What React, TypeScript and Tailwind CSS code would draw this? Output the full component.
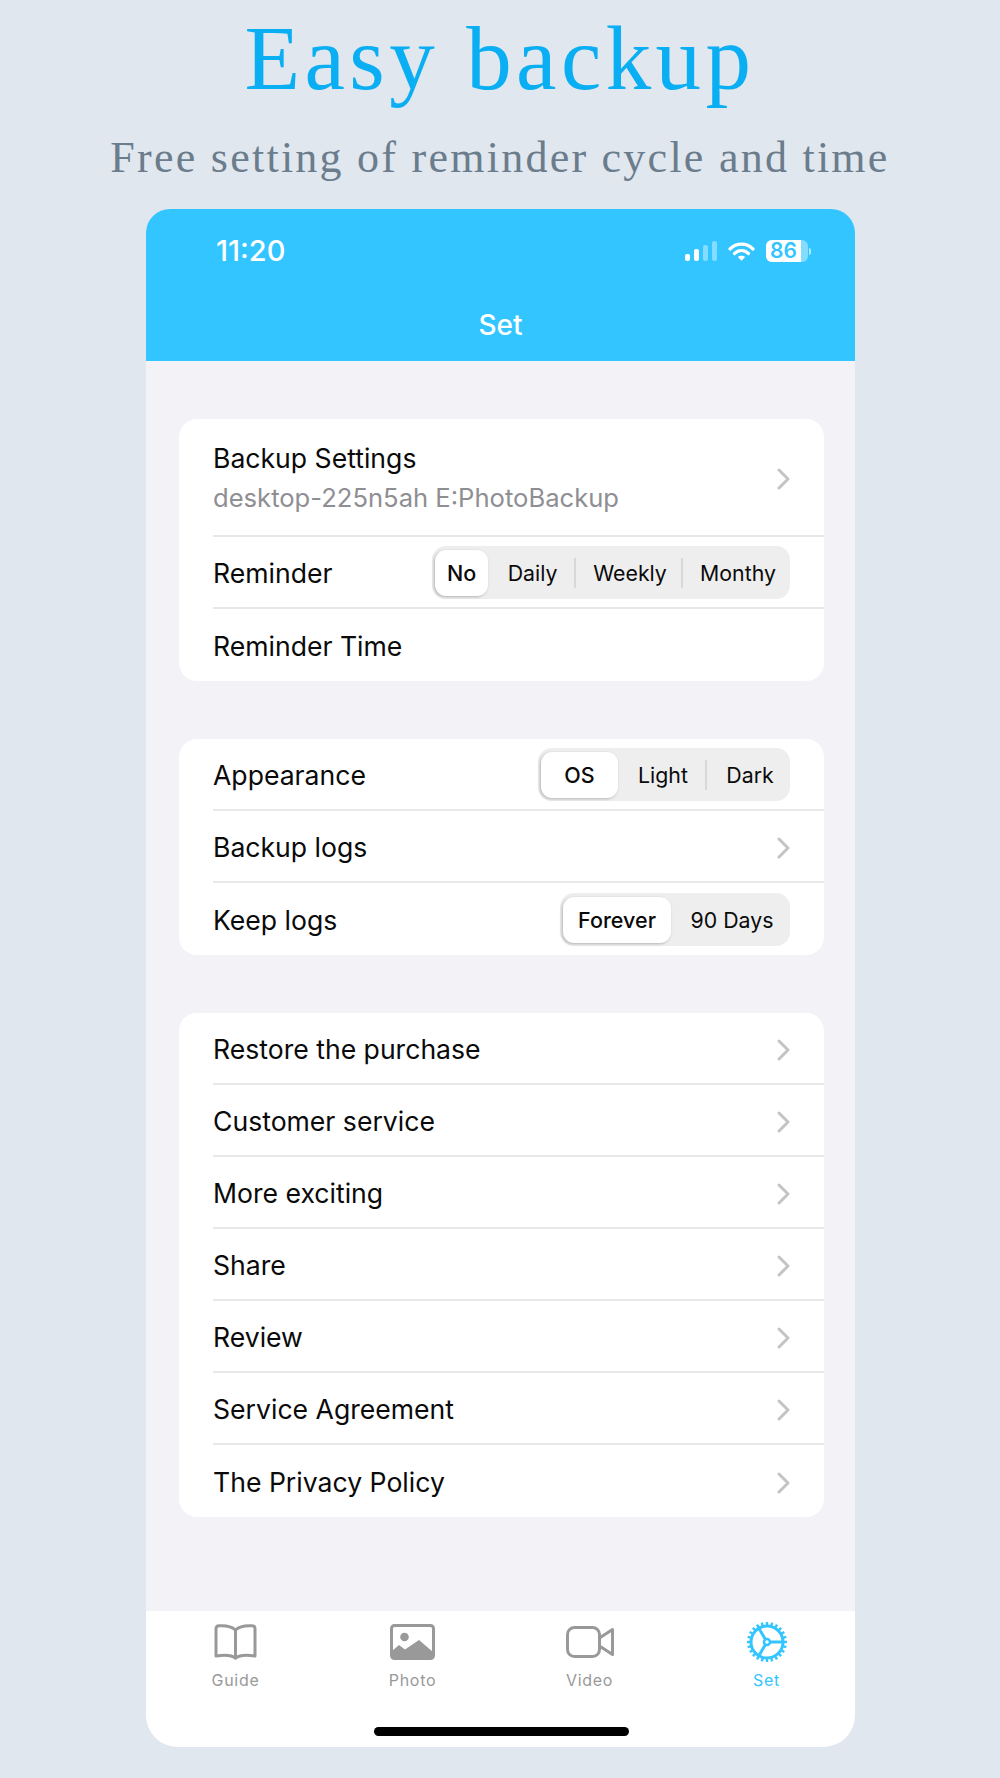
import { ReactNode } from "react";

const rowLabel = "pt-[2px] text-[26.6px] leading-[34px] text-[#0a0a0a]";

function Chevron() {
  return (
    <svg width="13" height="22" viewBox="0 0 13 22" fill="none" className="mt-[3px] shrink-0">
      <path d="M2 2l9 9-9 9" stroke="#c4c4c6" strokeWidth="3" strokeLinecap="round" strokeLinejoin="round" />
    </svg>
  );
}

type Seg = { label: string; width: string; divider?: boolean };

function Segmented({ items }: { items: Seg[] }) {
  return (
    <div className="mt-[1px] flex h-[53px] items-center rounded-[14px] bg-[#eeeeef] pl-[3px]">
      {items.map((s, i) =>
        i === 0 ? (
          <div
            key={s.label}
            className={`${s.width} flex h-[46px] items-center justify-center rounded-[11px] bg-white pt-[2px] text-[21.5px] font-medium text-[#0a0a0a] shadow-[-1px_1px_3px_rgba(0,0,0,0.25)]`}
          >
            {s.label}
          </div>
        ) : (
          <div key={s.label} className={`${s.width} flex h-[30px] items-center justify-center pt-[2px] pl-[3px] text-[21.3px] text-[#0a0a0a] ${s.divider ? "border-r-2 border-[#d8d8da]" : ""}`}>
            {s.label}
          </div>
        )
      )}
    </div>
  );
}

function Row({ children, last }: { children: ReactNode; last?: boolean }) {
  return (
    <div className="pl-[34px]">
      <div className={`flex h-[72px] items-center justify-between pr-[34px] ${last ? "" : "border-b-2 border-[#e8e8ea]"}`}>{children}</div>
    </div>
  );
}

function LinkRow({ label, last }: { label: string; last?: boolean }) {
  return (
    <Row last={last}>
      <span className={rowLabel}>{label}</span>
      <Chevron />
    </Row>
  );
}

function Card({ children }: { children: ReactNode }) {
  return <div className="mb-[58px] rounded-[18px] bg-white">{children}</div>;
}

function BookIcon() {
  return (
    <svg width="43" height="36" viewBox="0 0 43 36" fill="none" stroke="#999999" strokeWidth="3" strokeLinejoin="round" strokeLinecap="round">
      <path d="M21.5 6C18 2.8 13 1.8 8 1.8H5Q2 1.8 2 5V32C8 31 16.500 30 21.500 34C26.500 30 35 31 41 32V5Q41 1.800 38 1.800H35C30 1.800 25 2.800 21.500 6Z" />
      <path d="M21.500 6V34" />
    </svg>
  );
}

function PhotoIcon() {
  return (
    <svg width="45" height="36" viewBox="0 0 45 36" fill="none">
      <rect x="1.500" y="1.500" width="42" height="33" rx="3" stroke="#999999" strokeWidth="3" />
      <circle cx="14.500" cy="13" r="4.300" fill="#999999" />
      <path d="M2 33V27L9 21L15 25.500L29 16L43 28V33Z" fill="#999999" />
    </svg>
  );
}

function VideoIcon() {
  return (
    <svg width="48" height="32" viewBox="0 0 48 32" fill="none" stroke="#999999" strokeWidth="3" strokeLinejoin="round">
      <rect x="1.500" y="1.500" width="32" height="29" rx="7" />
      <path d="M33.500 12L46.500 3.500V28.500L33.500 20" />
    </svg>
  );
}

function GearIcon() {
  const teeth = Array.from({ length: 24 }, (_, i) => i * 15);
  return (
    <svg width="42" height="42" viewBox="0 0 42 42" fill="none" stroke="#33c5ff">
      <circle cx="21" cy="21" r="16" strokeWidth="3" />
      <circle cx="21" cy="21" r="3" strokeWidth="2.500" />
      <path d="M24 21H37M19.500 18.500L13 7.500M19.500 23.500L13 34.500" strokeWidth="3" />
      {teeth.map((a) => (
        <rect key={a} x="19.800" y="1" width="2.400" height="4" fill="#33c5ff" stroke="none" transform={`rotate(${a} 21 21)`} />
      ))}
    </svg>
  );
}

function Tab({ label, icon, active }: { label: string; icon: ReactNode; active?: boolean }) {
  return (
    <div className="flex flex-col items-center">
      <div className="flex h-[44px] items-center">{icon}</div>
      <span className={`mt-[6px] text-[16px] leading-[20px] tracking-[0.7px] ${active ? "text-[#33c5ff]" : "text-[#999999]"}`}>{label}</span>
    </div>
  );
}

export default function App() {
  return (
    <div className="h-[1778px] w-[1000px] overflow-hidden bg-[#e0e7ee] font-['Inter',sans-serif]">
      <h1 className="pt-[9px] text-center font-['Liberation_Serif',serif] text-[91px] leading-[100px] font-normal tracking-[4.4px] text-[#0aaef3]">Easy backup</h1>
      <p className="mt-[24px] text-center font-['Liberation_Serif',serif] text-[44px] leading-[50px] tracking-[2.25px] text-[#6b7c8c]">Free setting of reminder cycle and time</p>

      <div className="mt-[26px] ml-[146px] flex h-[1538px] w-[709px] flex-col overflow-hidden rounded-t-[24px] rounded-b-[32px] bg-[#f2f2f7]">
        {/* Header */}
        <div className="h-[152px] bg-[#33c5ff] text-white">
          <div className="flex h-[84px] items-center justify-between pr-[44px] pl-[70px]">
            <span className="text-[29px] font-medium">11:20</span>
            <div className="flex items-center">
              <div className="flex h-[20px] items-end gap-[4px]">
                <div className="h-[7px] w-[5px] rounded-[2px] bg-white" />
                <div className="h-[12px] w-[5px] rounded-[2px] bg-white" />
                <div className="h-[16px] w-[5px] rounded-[2px] bg-white/40" />
                <div className="h-[20px] w-[5px] rounded-[2px] bg-white/40" />
              </div>
              <svg width="27" height="19" viewBox="0 0 27 19" fill="none" stroke="white" strokeWidth="3.200" strokeLinecap="round" className="ml-[11px]">
                <path d="M2 7C8.500 .6 18.500 .6 25 7" />
                <path d="M6.500 11.500C10.500 7.500 16.500 7.500 20.500 11.500" />
                <path d="M13.500 18.800L9.800 15C11.800 13.200 15.200 13.200 17.200 15Z" fill="white" stroke="none" />
              </svg>
              <div className="ml-[11px] flex items-center">
                <div className="flex h-[22px] w-[42px] items-center rounded-[6px] bg-white/40">
                  <div className="flex h-full w-[35px] items-center justify-center rounded-l-[6px] bg-white text-[21px] leading-[22px] font-semibold text-[#33c5ff]">86</div>
                </div>
                <div className="ml-[1px] h-[7px] w-[2px] rounded-r-[2px] bg-white/60" />
              </div>
            </div>
          </div>
          <div className="flex h-[64px] items-center justify-center text-[28px] font-medium">Set</div>
        </div>

        {/* Content */}
        <div className="flex-1 pt-[58px] pr-[31px] pl-[33px]">
          <Card>
            <div className="pl-[34px]">
              <div className="flex h-[118px] items-center justify-between border-b-2 border-[#e8e8ea] pr-[34px]">
                <div>
                  <div className={rowLabel}>Backup Settings</div>
                  <div className="mt-[6px] text-[25.6px] leading-[34px] text-[#8e8e93]">desktop-225n5ah E:PhotoBackup</div>
                </div>
                <Chevron />
              </div>
            </div>
            <Row>
              <span className={rowLabel}>Reminder</span>
              <Segmented
                items={[
                  { label: "No", width: "w-[53px]" },
                  { label: "Daily", width: "w-[88px]", divider: true },
                  { label: "Weekly", width: "w-[107px]", divider: true },
                  { label: "Monthy", width: "w-[107px]" },
                ]}
              />
            </Row>
            <Row last>
              <span className={rowLabel}>Reminder Time</span>
            </Row>
          </Card>

          <Card>
            <Row>
              <span className={rowLabel}>Appearance</span>
              <Segmented
                items={[
                  { label: "OS", width: "w-[77px]" },
                  { label: "Light", width: "w-[89px]", divider: true },
                  { label: "Dark", width: "w-[83px]" },
                ]}
              />
            </Row>
            <LinkRow label="Backup logs" />
            <Row last>
              <span className={rowLabel}>Keep logs</span>
              <Segmented
                items={[
                  { label: "Forever", width: "w-[108px]" },
                  { label: "90 Days", width: "w-[119px]" },
                ]}
              />
            </Row>
          </Card>

          <Card>
            <LinkRow label="Restore the purchase" />
            <LinkRow label="Customer service" />
            <LinkRow label="More exciting" />
            <LinkRow label="Share" />
            <LinkRow label="Review" />
            <LinkRow label="Service Agreement" />
            <LinkRow label="The Privacy Policy" last />
          </Card>
        </div>

        {/* Tab bar */}
        <div className="flex h-[136px] flex-col bg-white">
          <div className="grid grid-cols-4 pt-[9px] pl-[1px]">
            <Tab label="Guide" icon={<BookIcon />} />
            <Tab label="Photo" icon={<PhotoIcon />} />
            <Tab label="Video" icon={<VideoIcon />} />
            <Tab label="Set" icon={<GearIcon />} active />
          </div>
          <div className="mt-[37px] ml-[228px] h-[9px] w-[255px] rounded-full bg-black" />
        </div>
      </div>
    </div>
  );
}
